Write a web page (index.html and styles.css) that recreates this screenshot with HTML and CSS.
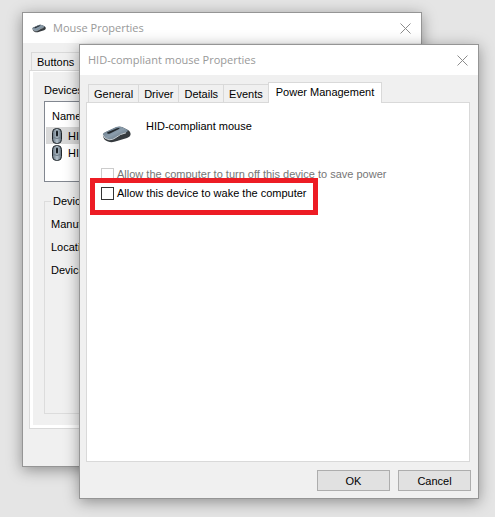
FILE: index.html
```
<!DOCTYPE html>
<html lang="en">
<head>
<meta charset="utf-8">
<title>HID-compliant mouse Properties</title>
<link rel="stylesheet" href="styles.css">
</head>
<body>
<svg class="defs" aria-hidden="true">
  <defs>
    <linearGradient id="shell" x1="0" y1="0" x2="1" y2="1">
      <stop offset="0" stop-color="#5d6e7c"/><stop offset=".5" stop-color="#8b9dac"/><stop offset="1" stop-color="#55636f"/>
    </linearGradient>
    <linearGradient id="top" x1="0" y1="0" x2="1" y2="0">
      <stop offset="0" stop-color="#64727f"/><stop offset=".5" stop-color="#b4c2cc"/><stop offset="1" stop-color="#5d6b78"/>
    </linearGradient>
    <symbol id="mouse-side" viewBox="0 0 29 17">
      <path d="M1 9 Q1 7 4 6 L14 1.500 Q17 .3 20 1 L26 4 Q29 6 28.500 9 Q28 11 25 12 L15 15 Q10 17 6 15.500 Q1 14 1 9Z" fill="#353a3e"/>
      <path d="M.8 8.500 Q1 7 4 5.800 L14 1 Q17 0 20 1 L25 3.500 Q27 5 24 6.500 Q18 8 14 11.500 Q11 14 7 13.500 Q2 12.500 .8 8.500Z" fill="url(#shell)"/>
      <path d="M1 9 Q2 13 7 13.800 Q11 14 14 11.500 Q18 8 24 6.800" fill="none" stroke="#c8ced2" stroke-width="1"/>
      <path d="M5 6.500 L15 2.200 Q18 1.500 17.500 2.800 L8 7.500 Q5 8.500 5 6.500Z" fill="#23292e"/>
    </symbol>
    <symbol id="mouse-top" viewBox="0 0 10 16">
      <rect x=".5" y=".5" width="9" height="15" rx="4" fill="url(#top)" stroke="#20262b"/>
      <path d="M1.500 9.500 Q5 11.500 8.500 9.500" fill="none" stroke="#6b7985"/>
      <rect x="4" y="2.500" width="2" height="6" rx="1" fill="#171d22"/>
    </symbol>
    <symbol id="cross" viewBox="0 0 11 11">
      <path d="M.5 .5 L10.500 10.500 M10.500 .5 L.5 10.500" fill="none" stroke="#8c8c8c"/>
    </symbol>
  </defs>
</svg>

<section class="window back" aria-label="Mouse Properties">
  <header class="titlebar">
    <svg class="title-icon" aria-hidden="true"><use href="#mouse-side"/></svg>
    <h1>Mouse Properties</h1>
    <button class="close" aria-label="Close"><svg><use href="#cross"/></svg></button>
  </header>
  <div class="content">
    <nav class="tabs"><button class="tab">Buttons</button></nav>
    <div class="panel framed">
      <div class="page">
        <p class="label">Devices:</p>
        <table class="devices">
          <thead><tr><th>Name</th></tr></thead>
          <tbody>
            <tr class="selected"><td><span class="device"><svg><use href="#mouse-top"/></svg>HID</span></td></tr>
            <tr><td><span class="device"><svg><use href="#mouse-top"/></svg>HID</span></td></tr>
            <tr class="blank"><td></td></tr>
          </tbody>
        </table>
        <fieldset class="group">
          <legend>Device</legend>
          <p>Manufacturer:</p>
          <p>Location:</p>
          <p>Device Status:</p>
        </fieldset>
      </div>
    </div>
  </div>
</section>

<section class="window front" aria-label="HID-compliant mouse Properties">
  <header class="titlebar">
    <h1>HID-compliant mouse Properties</h1>
    <button class="close" aria-label="Close"><svg><use href="#cross"/></svg></button>
  </header>
  <div class="content">
    <nav class="tabs">
      <button class="tab">General</button>
      <button class="tab">Driver</button>
      <button class="tab">Details</button>
      <button class="tab">Events</button>
      <button class="tab active">Power Management</button>
    </nav>
    <div class="panel">
      <div class="heading">
        <svg class="heading-icon" aria-hidden="true"><use href="#mouse-side"/></svg>
        <p>HID-compliant mouse</p>
      </div>
      <div class="options">
        <label class="option off"><input type="checkbox" disabled>Allow the computer to turn off this device to save power</label>
        <label class="option"><input type="checkbox">Allow this device to wake the computer</label>
        <div class="highlight"></div>
      </div>
    </div>
    <footer class="actions">
      <button class="push">OK</button>
      <button class="push">Cancel</button>
    </footer>
  </div>
</section>
</body>
</html>
```
FILE: styles.css
```
* { box-sizing: border-box; }
body {
  margin: 0;
  min-height: 100vh;
  position: relative;
  overflow: hidden;
  background: #e5e5e5;
  font: 11px/16px "Liberation Sans", Arial, sans-serif;
  color: #000;
}
p, h1 { margin: 0; }
button { font: inherit; color: inherit; }
.defs { position: absolute; width: 0; height: 0; }

.window {
  position: absolute;
  display: flex;
  flex-direction: column;
  background: #f0f0f0;
  border: 1px solid #959595;
  box-shadow: 0 3px 14px rgba(0, 0, 0, .38);
  overflow: hidden;
}
.back { inset: 12px 73px 50px 22px; z-index: 1; }
.front { inset: 44px 16px 18px 79px; z-index: 2; }

.titlebar {
  display: flex;
  align-items: center;
  height: 30px;
  flex: none;
  padding: 0 10px 0 8px;
  background: #fff;
}
.titlebar h1 {
  flex: 1;
  font: 11px/16px "Open Sans", "Noto Sans", sans-serif;
  color: #999;
}
.title-icon { width: 14px; height: 9px; margin: 0 7px 0 1px; }
.close { display: flex; padding: 0; border: 0; background: none; }
.close svg { width: 11px; height: 11px; }

.content {
  flex: 1;
  min-height: 0;
  display: flex;
  flex-direction: column;
  padding: 7px 8px 7px 6px;
}
.tabs {
  display: flex;
  align-items: flex-end;
  height: 21px;
  flex: none;
  padding-left: 2px;
  margin-bottom: -1px;
  z-index: 1;
}
.tab {
  height: 18px;
  margin-right: -1px;
  margin-bottom: 1px;
  padding: 0 5px;
  border: 1px solid #d9d9d9;
  border-bottom: 0;
  background: #f0f0f0;
  white-space: nowrap;
}
.tab.active {
  height: 21px;
  margin-bottom: 0;
  padding: 0 7px 2px;
  background: #fff;
}
.panel {
  flex: 1;
  min-height: 0;
  border: 1px solid #d9d9d9;
  background: #fff;
}
.back .content { padding-bottom: 37px; }
.framed { padding: 1px 3px 3px; }
.page {
  height: 100%;
  display: flex;
  flex-direction: column;
  padding: 10px 11px 11px;
  background: #f0f0f0;
}

.devices {
  flex: none;
  width: 100%;
  margin: 3px 0 11px;
  border: 1px solid #828790;
  border-spacing: 0;
  background: #fff;
}
.devices th {
  height: 25px;
  padding: 2px 7px 0;
  text-align: left;
  font-weight: 400;
}
.devices td { padding: 0 1px; height: 17px; }
.devices .blank td { height: 20px; }
.device { display: flex; align-items: center; gap: 6px; height: 17px; padding-left: 6px; }
.device svg { width: 10px; height: 16px; }
.selected .device { background: #d9d9d9; }

.group {
  flex: 1;
  min-width: 0;
  margin: 0;
  padding: 0 6px;
  border: 1px solid #dcdcdc;
}
.group legend { padding: 0 2px; }
.group p { margin: 7px 0; }

.heading {
  display: flex;
  padding: 15px 15px 0;
  gap: 15px;
}
.heading-icon { width: 29px; height: 17px; margin-top: 8px; }
.options {
  position: relative;
  display: flex;
  flex-direction: column;
  gap: 3px;
  padding: 23px 14px 0;
}
.option { display: flex; align-items: center; gap: 3px; }
.option.off { color: #767676; }
.option input {
  appearance: none;
  width: 13px;
  height: 13px;
  margin: 0;
  border: 1px solid #333;
  background: #fff;
}
.option.off input { border-color: #ccc; }
.highlight {
  position: absolute;
  left: 3px;
  top: 35px;
  width: 228px;
  height: 37px;
  border: 5px solid #ed1c24;
  pointer-events: none;
}

.actions {
  display: flex;
  justify-content: flex-end;
  gap: 8px;
  margin: 8px -1px 0 0;
}
.push {
  width: 73px;
  height: 21px;
  padding: 0;
  border: 1px solid #adadad;
  background: #e1e1e1;
}
```
